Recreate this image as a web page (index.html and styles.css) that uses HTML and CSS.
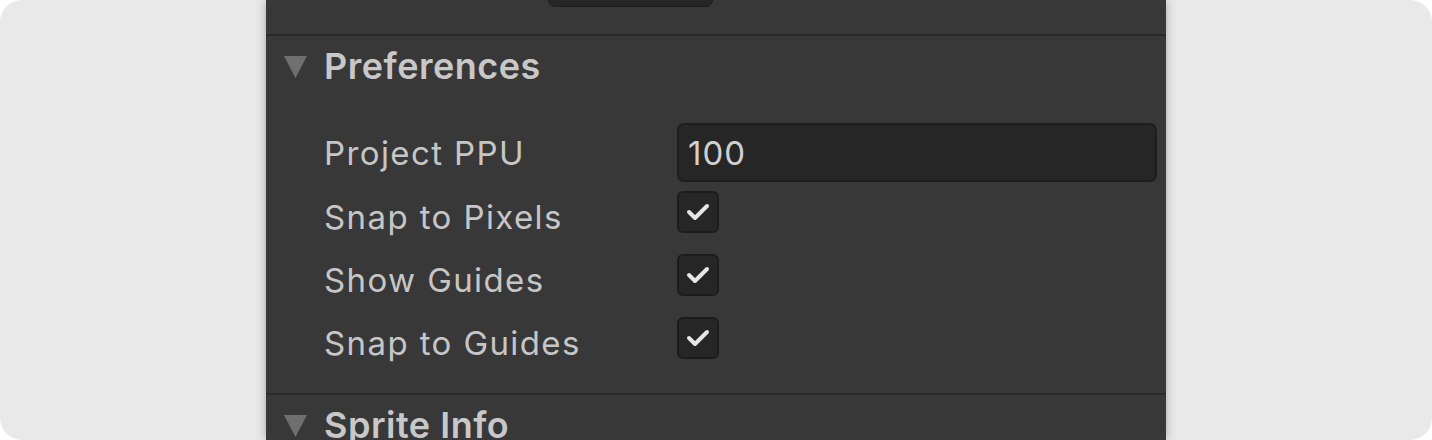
FILE: index.html
```html
<!DOCTYPE html>
<html lang="en">
<head>
<meta charset="UTF-8">
<title>Inspector - Preferences</title>
<link rel="stylesheet" href="styles.css">
</head>
<body>
    <div class="card">
        <div class="panel">
            <div class="scroll">
                <div class="prev_section">
                    <div class="prev_btn"></div>
                </div>

                <div class="section">
                    <div class="section_head">
                        <svg class="caret" width="23" height="22" viewBox="0 0 23 22"><polygon points="0,0 23,0 11.5,22" fill="#6f6f6f"/></svg>
                        <span>Preferences</span>
                    </div>
                    <div class="section_body">
                        <div class="row row_input">
                            <span class="label">Project PPU</span>
                            <div class="text_field">100</div>
                        </div>
                        <div class="row">
                            <span class="label">Snap to Pixels</span>
                            <div class="check">
                                <svg width="24" height="20" viewBox="0 0 24 20"><polyline points="3,10 9,16 21,4" fill="none" stroke="#e6e6e6" stroke-width="4" stroke-linecap="round" stroke-linejoin="round"/></svg>
                            </div>
                        </div>
                        <div class="row">
                            <span class="label">Show Guides</span>
                            <div class="check">
                                <svg width="24" height="20" viewBox="0 0 24 20"><polyline points="3,10 9,16 21,4" fill="none" stroke="#e6e6e6" stroke-width="4" stroke-linecap="round" stroke-linejoin="round"/></svg>
                            </div>
                        </div>
                        <div class="row">
                            <span class="label">Snap to Guides</span>
                            <div class="check">
                                <svg width="24" height="20" viewBox="0 0 24 20"><polyline points="3,10 9,16 21,4" fill="none" stroke="#e6e6e6" stroke-width="4" stroke-linecap="round" stroke-linejoin="round"/></svg>
                            </div>
                        </div>
                    </div>
                </div>

                <div class="section">
                    <div class="section_head">
                        <svg class="caret" width="23" height="22" viewBox="0 0 23 22"><polygon points="0,0 23,0 11.5,22" fill="#6f6f6f"/></svg>
                        <span>Sprite Info</span>
                    </div>
                </div>
            </div>
        </div>
    </div>
</body>
</html>
```

FILE: styles.css
```css
body{
    margin: 0px;
    background-color: #ffffff;
    font-family: Inter, "Noto Sans", sans-serif;
}
.card{
    width: 1432px;
    height: 440px;
    background-color: #e9e9e9;
    border-radius: 22px;
    overflow: hidden;
}
.panel{
    margin-left: 266px;
    width: 900px;
    height: 100%;
    background-color: #383838;
    box-shadow: 0 0 10px rgba(0, 0, 0, 0.28);
    overflow: hidden;
}
.scroll{
    margin-top: -40px;
}
.prev_section{
    padding: 0 0 27px 282px;
    border-bottom: 2px solid #2a2a2a;
}
.prev_btn{
    width: 163px;
    height: 45px;
    background-color: #262626;
    border: 1px solid #1e1e1e;
    border-radius: 7px;
}
.section{
    border-bottom: 2px solid #2a2a2a;
}
.section_head{
    display: flex;
    align-items: center;
    gap: 17px;
    padding-left: 18px;
    height: 60px;
    color: #c8c8c8;
    font-size: 36px;
    font-weight: 600;
    letter-spacing: 0.5px;
}
.section_head span{
    margin-bottom: 1px;
}
.caret{
    flex-shrink: 0;
    margin-top: 2px;
}
.section_body{
    padding: 27px 9px 34px 58px;
    display: flex;
    flex-direction: column;
    gap: 21px;
}
.row{
    display: grid;
    grid-template-columns: 353px 1fr;
    grid-template-rows: 42px;
    align-items: center;
    height: 42px;
}
.row .label{
    line-height: 32px;
    padding-top: 10px;
}
.row_input{
    grid-template-rows: 59px;
    height: 59px;
    margin-bottom: -12px;
}
.row_input .label{
    line-height: 40px;
    padding-top: 0;
}
.label{
    color: #c6c6c6;
    font-size: 33px;
    letter-spacing: 1.4px;
}
.text_field{
    box-sizing: border-box;
    height: 59px;
    padding-left: 9px;
    display: flex;
    align-items: center;
    background-color: #262626;
    border: 2px solid #1e1e1e;
    border-radius: 7px;
    color: #d0d0d0;
    font-size: 33px;
    letter-spacing: 1px;
}
.check{
    width: 42px;
    height: 42px;
    box-sizing: border-box;
    background-color: #262626;
    border: 2px solid #1c1c1c;
    border-radius: 6px;
    display: flex;
    align-items: center;
    justify-content: center;
}
```
